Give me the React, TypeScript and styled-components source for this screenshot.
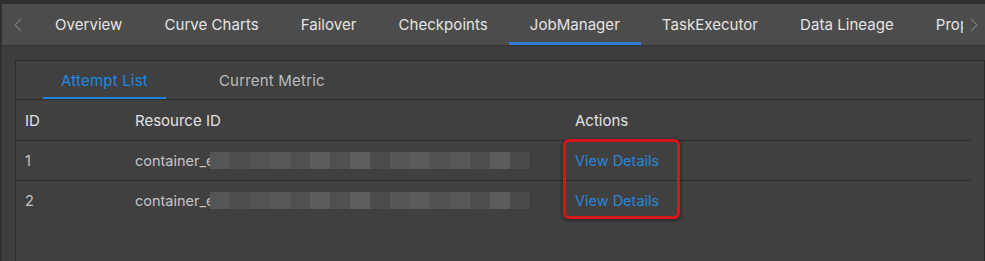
import React from 'react';
import styled, { createGlobalStyle } from 'styled-components';

const GlobalStyle = createGlobalStyle`
  html, body {
    margin: 0;
    padding: 0;
    background: #3d3d3d;
    font-family: Inter, "Liberation Sans", sans-serif;
    overflow: hidden;
  }
`;

const Page = styled.div`
  height: 261px;
  border-top: 4px solid #2f2f2f;
  border-left: 2px solid #2f2f2f;
  background: #3d3d3d;
  overflow: hidden;
`;

const TabBar = styled.div`
  display: flex;
  align-items: stretch;
  height: 41px;
  background: #4c4c4c;
  border-bottom: 1px solid #323232;
  overflow: hidden;
`;

const Arrow = styled.div<{ $w: number }>`
  flex: 0 0 ${({ $w }) => $w}px;
  display: flex;
  align-items: center;
  justify-content: center;
  color: #7a7a7a;
`;

const TabList = styled.div`
  flex: 1;
  display: flex;
  overflow: hidden;
  white-space: nowrap;
`;

const Tab = styled.div<{ $active?: boolean }>`
  display: flex;
  align-items: center;
  padding: 3px 21px 0;
  font-size: 15px;
  letter-spacing: 0.05px;
  color: #e4e4e4;
  border-bottom: 3px solid ${({ $active }) => ($active ? '#2f7fd4' : 'transparent')};
  box-sizing: border-box;
`;

const Content = styled.div`
  padding: 14px 0 0 13px;
`;

const Card = styled.div`
  background: #404040;
  border: 1px solid #2f2f2f;
  border-right-color: #2b2b2b;
  height: 260px;
`;

const InnerTabs = styled.div`
  display: flex;
  gap: 35px;
  height: 38px;
  padding-left: 27px;
  border-bottom: 1px solid #2f2f2f;
`;

const InnerTab = styled.div<{ $active?: boolean }>`
  display: flex;
  align-items: center;
  padding: 2px 18px 0;
  font-size: 15px;
  letter-spacing: 0.2px;
  color: ${({ $active }) => ($active ? '#1f88e0' : '#bcbcbc')};
  border-bottom: 2px solid ${({ $active }) => ($active ? '#1f82dc' : 'transparent')};
`;

const Table = styled.div`
  margin-right: 13px;
`;

const Row = styled.div<{ $line?: boolean; $h: number }>`
  display: grid;
  grid-template-columns: 110px 440px 1fr;
  height: ${({ $h }) => $h}px;
  box-sizing: border-box;
  align-items: center;
  border-bottom: 1px solid ${({ $line }) => ($line ? '#2e2e2e' : 'transparent')};
`;

const HeadCell = styled.div`
  padding-left: 9px;
  font-size: 15px;
  color: #e2e2e2;
`;

const Cell = styled.div`
  padding-left: 9px;
  font-size: 14.5px;
  color: #c4c4c4;
  display: flex;
  align-items: center;
  white-space: nowrap;
  overflow: hidden;
`;

const Body = styled.div`
  position: relative;
`;

const Link = styled.a`
  color: #2a85d8;
  font-size: 14.5px;
  text-decoration: none;
`;

const Redact = styled.div`
  display: flex;
  height: 17px;
  margin-left: -5px;
`;

const Pixel = styled.div<{ $shade: string }>`
  width: 20px;
  height: 100%;
  background: ${({ $shade }) => $shade};
`;

const Highlight = styled.div`
  position: absolute;
  left: 547px;
  top: -2px;
  width: 117px;
  height: 80px;
  box-sizing: border-box;
  border: 3px solid #d8141b;
  border-radius: 6px;
  box-shadow: 0 1px 4px rgba(0, 0, 0, 0.55);
  pointer-events: none;
`;

const tabs = [
  'Overview',
  'Curve Charts',
  'Failover',
  'Checkpoints',
  'JobManager',
  'TaskExecutor',
  'Data Lineage',
  'Properties',
];

const shades = [
  '#565656', '#4e4e4e', '#545454', '#585858', '#515151', '#5c5c5c', '#505050', '#5e5e5e',
  '#4c4c4c', '#575757', '#5a5a5a', '#535353', '#585858', '#4f4f4f', '#5c5c5c', '#4a4a4a',
];

const Chevron = ({ dir }: { dir: 'left' | 'right' }) => (
  <svg width="8" height="14" viewBox="0 0 8 14" fill="none">
    <path
      d={dir === 'left' ? 'M7 1 L1 7 L7 13' : 'M1 1 L7 7 L1 13'}
      stroke="currentColor"
      strokeWidth="1.2"
    />
  </svg>
);

const attempts = [
  { id: 1, resource: 'container_e' },
  { id: 2, resource: 'container_e' },
];

const App: React.FC = () => (
  <>
    <GlobalStyle />
    <Page>
      <TabBar>
        <Arrow $w={32}>
          <Chevron dir="left" />
        </Arrow>
        <TabList>
          {tabs.map((t) => (
            <Tab key={t} $active={t === 'JobManager'}>
              {t}
            </Tab>
          ))}
        </TabList>
        <Arrow $w={22}>
          <Chevron dir="right" />
        </Arrow>
      </TabBar>
      <Content>
        <Card>
          <InnerTabs>
            <InnerTab $active>Attempt List</InnerTab>
            <InnerTab>Current Metric</InnerTab>
          </InnerTabs>
          <Table>
            <Row $line $h={41}>
              <HeadCell>ID</HeadCell>
              <HeadCell>Resource ID</HeadCell>
              <HeadCell>Actions</HeadCell>
            </Row>
            <Body>
              {attempts.map((a, i) => (
                <Row key={a.id} $line={i === 0} $h={40}>
                  <Cell>{a.id}</Cell>
                  <Cell>
                    {a.resource}
                    <Redact>
                      {shades.map((s, j) => (
                        <Pixel key={j} $shade={s} />
                      ))}
                    </Redact>
                  </Cell>
                  <Cell>
                    <Link href="#">View Details</Link>
                  </Cell>
                </Row>
              ))}
              <Highlight />
            </Body>
          </Table>
        </Card>
      </Content>
    </Page>
  </>
);

export default App;
